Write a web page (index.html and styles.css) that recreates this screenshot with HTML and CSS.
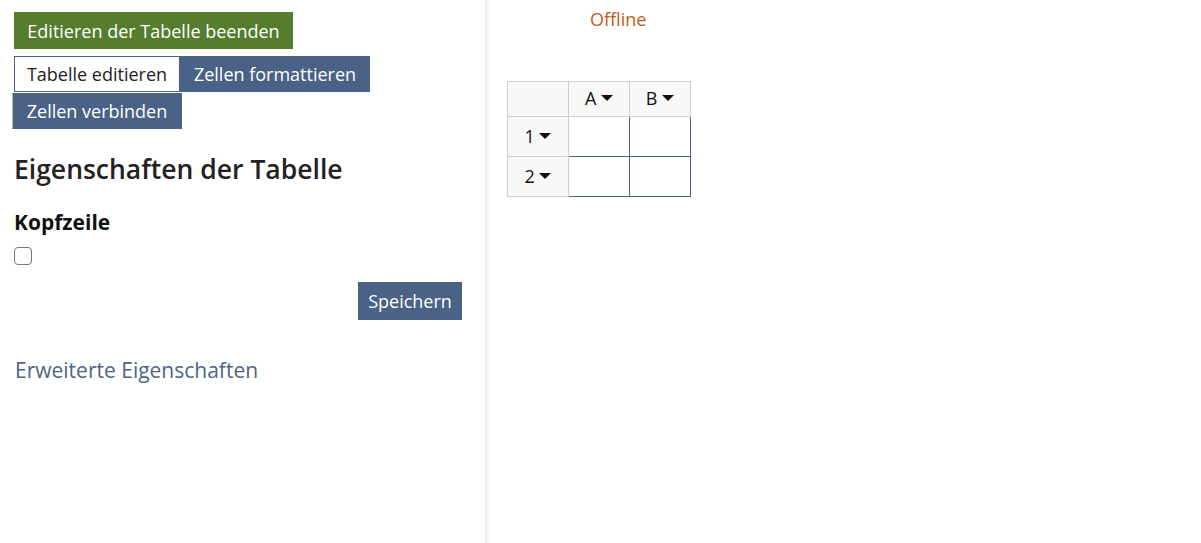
FILE: index.html
```html
<!DOCTYPE html>
<html lang="de">
<head>
<meta charset="utf-8">
<title>Tabelle</title>
<link rel="stylesheet" href="styles.css">
</head>
<body>
<div class="layout">
  <aside class="side">
    <button class="btn btn-green">Editieren der Tabelle beenden</button>
    <div class="tabs">
      <button class="tab tab-active">Tabelle editieren</button>
      <button class="tab">Zellen formattieren</button>
      <button class="tab tab-wrap">Zellen verbinden</button>
    </div>
    <h2 class="title">Eigenschaften der Tabelle</h2>
    <h3 class="label">Kopfzeile</h3>
    <span class="check"></span>
    <div class="save-row"><button class="btn btn-blue">Speichern</button></div>
    <a class="more">Erweiterte Eigenschaften</a>
  </aside>
  <div class="divider"></div>
  <main class="main">
    <div class="status">Offline</div>
    <table class="grid">
      <tr class="head">
        <th class="first"></th>
        <th>A <span class="caret"></span></th>
        <th>B <span class="caret"></span></th>
      </tr>
      <tr>
        <th class="first">1 <span class="caret"></span></th>
        <td></td><td></td>
      </tr>
      <tr>
        <th class="first">2 <span class="caret"></span></th>
        <td></td><td></td>
      </tr>
    </table>
  </main>
</div>
</body>
</html>
```

FILE: styles.css
```css
* { box-sizing: border-box; }
html, body { margin: 0; padding: 0; background: #fff; }
body { font-family: "Open Sans", "Liberation Sans", sans-serif; color: #222; }
.layout { display: flex; height: 543px; }
.side { width: 485px; flex: none; padding: 12px 14px 0 14px; display: flex; flex-direction: column; align-items: flex-start; }
.divider { width: 7px; flex: none; background: linear-gradient(to right, #efefef, #fff); }
.main { flex: 1; padding: 0 0 0 15px; }
.btn { font-family: inherit; border: 0; color: #fff; cursor: pointer; white-space: nowrap; }
.btn-green { background: #567d2e; font-size: 18px; height: 37px; padding: 0; width: 279px; }
.tabs { display: flex; flex-wrap: wrap; margin-top: 7px; width: 457px; }
.tab { font-family: inherit; font-size: 18px; height: 36px; padding: 0; border: 1px solid #4a6285; background: #4a6285; color: #fff; white-space: nowrap; }
.tab-active { background: #fff; color: #222; width: 166px; }
.tab + .tab { width: 190px; }
.tab-wrap { margin-left: -2px; margin-top: 1px; width: 170px !important; border-left-color: #b9bec6; }
.title { font-size: 26.5px; font-weight: 600; margin: 22px 0 0; line-height: 36px; color: #222; }
.label { font-size: 21px; font-weight: 700; margin: 21px 0 0; line-height: 28px; color: #111; }
.check { width: 18px; height: 18px; border: 1.5px solid #767676; border-radius: 4px; margin-top: 11px; display: block; }
.save-row { width: 448px; display: flex; justify-content: flex-end; margin-top: 17px; }
.btn-blue { background: #4a6285; font-size: 18px; height: 38px; width: 104px; padding: 0; }
.more { font-size: 21px; color: #4d6587; margin-top: 36px; margin-left: 1px; line-height: 28px; }
.status { color: #c25b17; font-size: 18px; margin: 7px 0 0 83px; line-height: 24px; }
.grid { border-collapse: separate; border-spacing: 0; margin-top: 50px; }
.grid th, .grid td { box-sizing: content-box; width: 60px; padding: 0; height: 39px; }
.grid th { background: #f8f8f8; border-right: 1px solid #cfcfcf; border-bottom: 1px solid #cfcfcf; font-weight: 400; font-size: 18px; color: #111; line-height: 24px; padding-bottom: 2px; height: 37px; }
.grid th.first { border-left: 1px solid #cfcfcf; }
.grid .head th { border-top: 1px solid #cfcfcf; height: 32px; }
.grid td { border-right: 1px solid #4a6285; border-bottom: 1px solid #4a6285; }
.caret { display: inline-block; width: 0; height: 0; border-left: 6px solid transparent; border-right: 6px solid transparent; border-top: 6px solid #111; vertical-align: middle; position: relative; top: -2px; }
```
